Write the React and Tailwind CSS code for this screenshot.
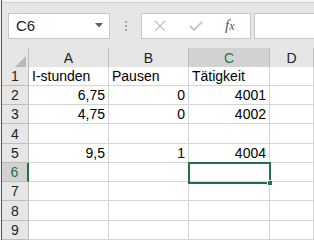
const COLS = ['A', 'B', 'C', 'D']

const ROWS = [
  { n: 1, cells: [{ v: 'I-stunden' }, { v: 'Pausen' }, { v: 'Tätigkeit' }] },
  { n: 2, cells: [{ v: '6,75', num: true }, { v: '0', num: true }, { v: '4001', num: true }] },
  { n: 3, cells: [{ v: '4,75', num: true }, { v: '0', num: true }, { v: '4002', num: true }] },
  { n: 4, cells: [] },
  { n: 5, cells: [{ v: '9,5', num: true }, { v: '1', num: true }, { v: '4004', num: true }] },
  { n: 6, cells: [], active: true },
  { n: 7, cells: [] },
  { n: 8, cells: [] },
  { n: 9, cells: [] },
]

const GRID = 'grid grid-cols-[27px_80px_80px_81px_1fr]'

function Toolbar() {
  return (
    <div className="flex h-[46px] items-start pt-[10px] pl-[6px]">
      <div className="flex h-[26px] w-[102px] items-center justify-between border border-[#c6c6c6] bg-white pl-[7px] pr-[6px]">
        <span className="text-[15px] text-[#222]">C6</span>
        <svg width="8" height="5" viewBox="0 0 8 5">
          <path d="M0 0h8L4 4.5z" fill="#5f5f5f" />
        </svg>
      </div>
      <div className="flex h-[26px] w-[31px] flex-col items-center justify-center gap-[2px]">
        <span className="h-[2px] w-[2px] bg-[#a6a6a6]" />
        <span className="h-[2px] w-[2px] bg-[#a6a6a6]" />
        <span className="h-[2px] w-[2px] bg-[#a6a6a6]" />
      </div>
      <div className="flex h-[26px] w-[110px] items-center border border-[#c6c6c6] bg-white">
        <svg className="ml-[12px]" width="12" height="12" viewBox="0 0 12 12">
          <path d="M1 1l10 10M11 1L1 11" stroke="#c4c4c4" strokeWidth="1.4" />
        </svg>
        <svg className="ml-[23px]" width="14" height="10" viewBox="0 0 14 10">
          <path d="M1 5l4 4 8-8" stroke="#c4c4c4" strokeWidth="1.8" fill="none" />
        </svg>
        <span className="ml-[22px] font-['Liberation_Serif',serif] text-[15px] italic leading-none text-[#555]">
          f<span className="text-[12px]">x</span>
        </span>
      </div>
      <div className="ml-[3px] h-[26px] flex-1 border border-r-0 border-[#c6c6c6] bg-white" />
    </div>
  )
}

function HeaderRow() {
  return (
    <div className={`${GRID} h-[19px] bg-[#e6e6e6]`}>
      <div className="relative border-r border-b border-[#bdbdbd]">
        <svg className="absolute right-[2px] bottom-[2px]" width="12" height="12" viewBox="0 0 12 12">
          <path d="M12 0V12H0z" fill="#b8b8b8" />
        </svg>
      </div>
      {COLS.map((c) =>
        c === 'C' ? (
          <div
            key={c}
            className="flex items-center justify-center border-r border-b-2 border-r-[#bdbdbd] border-b-[#217346] bg-[#d2d2d2] text-[14px] text-[#217346]"
          >
            {c}
          </div>
        ) : (
          <div key={c} className="flex items-center justify-center border-r border-b border-[#bdbdbd] text-[14px] text-[#222]">
            {c}
          </div>
        )
      )}
    </div>
  )
}

function Row({ row }) {
  return (
    <div className={`${GRID} relative h-[20px] ${row.active ? 'z-10' : ''}`}>
      <div
        className={
          row.active
            ? 'flex items-end justify-center border-r-2 border-b border-r-[#217346] border-b-[#bdbdbd] bg-[#d2d2d2] pb-[1px] text-[14px] leading-[16px] text-[#217346]'
            : 'flex items-end justify-center border-r border-b border-[#bdbdbd] bg-[#e6e6e6] pb-[1px] text-[14px] leading-[16px] text-[#222]'
        }
      >
        {row.n}
      </div>
      {[0, 1, 2, 3].map((i) => {
        const cell = row.cells[i]
        const sel = row.active && i === 2
        return (
          <div
            key={i}
            className={`relative flex items-end border-r border-b border-[#d4d4d4] bg-white pb-[1px] text-[14px] leading-[16px] text-black ${
              cell && cell.num ? 'justify-end pr-[3px]' : 'justify-start pl-[3px]'
            }`}
          >
            {cell ? cell.v : null}
            {sel && (
              <div className="absolute -top-[1px] -left-[1px] z-10 h-[22px] w-[83px] border-2 border-[#217346]">
                <div className="absolute -right-[4px] -bottom-[4px] h-[6px] w-[6px] border border-white bg-[#217346]" />
              </div>
            )}
          </div>
        )
      })}
    </div>
  )
}

export default function App() {
  return (
    <div className="flex h-[240px] w-[314px] overflow-hidden bg-[#e6e6e6] font-['Liberation_Sans',Arial,sans-serif]">
      <div className="w-px bg-[#f3f3f3]" />
      <div className="w-px bg-[#217346]" />
      <div className="flex min-w-0 flex-1 flex-col">
        <div className="h-[3px] border-b border-[#d0d0d0] bg-[#f4f4f4]" />
        <Toolbar />
        <HeaderRow />
        {ROWS.map((r) => (
          <Row key={r.n} row={r} />
        ))}
      </div>
    </div>
  )
}
